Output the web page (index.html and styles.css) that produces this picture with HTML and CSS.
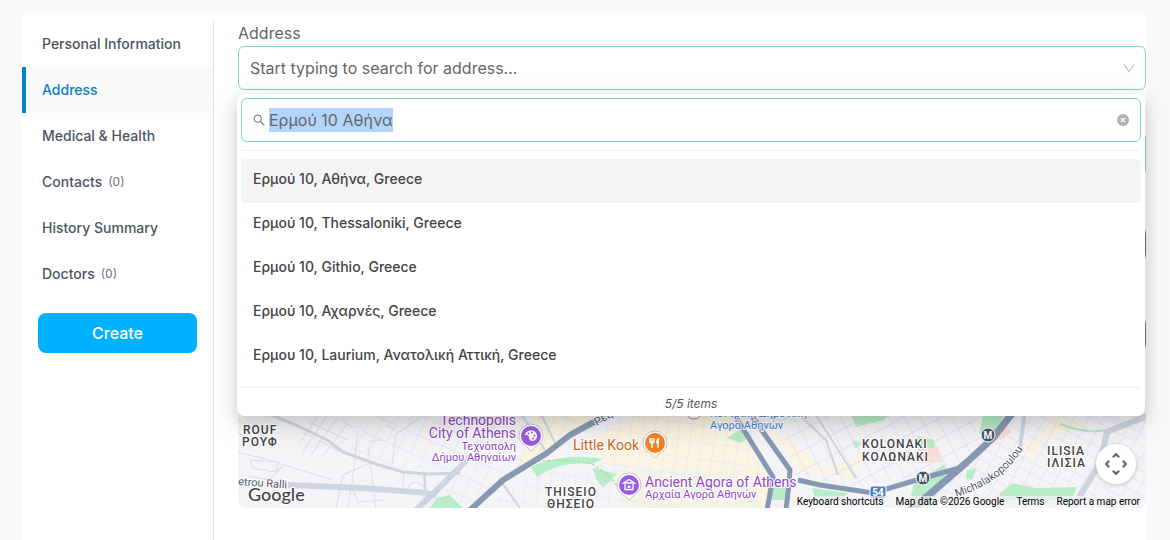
FILE: index.html
```html
<!DOCTYPE html>
<html lang="en">
<head>
<meta charset="utf-8">
<meta name="viewport" content="width=device-width, initial-scale=1">
<title>Address</title>
<link rel="stylesheet" href="styles.css">
</head>
<body>
<div class="panel">
  <aside class="sidebar">
    <nav class="nav" aria-label="Sections">
      <a class="nav-link" href="#personal">Personal Information</a>
      <a class="nav-link nav-link-active" href="#address" aria-current="page">Address</a>
      <a class="nav-link" href="#medical">Medical &amp; Health</a>
      <a class="nav-link" href="#contacts">Contacts <span class="count">(0)</span></a>
      <a class="nav-link" href="#history">History Summary</a>
      <a class="nav-link" href="#doctors">Doctors <span class="count">(0)</span></a>
    </nav>
    <button class="create" type="button">Create</button>
  </aside>

  <main class="content">
    <label class="label" for="address">Address</label>
    <div class="combo">
      <select class="select" id="address">
        <option>Start typing to search for address...</option>
      </select>
      <svg class="chevron" viewBox="0 0 12 12" aria-hidden="true"><path d="M1 2.5 6 9.5 11 2.5" fill="none" stroke="#bdbdbd" stroke-width="1.2"/></svg>

      <div class="dropdown">
        <div class="search">
          <svg class="search-icon" viewBox="0 0 12 12" aria-hidden="true"><circle cx="4.7" cy="4.7" r="3.7" fill="none" stroke="#666" stroke-width="1"/><path d="M7.4 7.4 11.3 11.3" stroke="#666" stroke-width="1.2"/></svg>
          <input class="search-input" id="query" type="text" value="Ερμού 10 Αθήνα" aria-label="Search address" autocomplete="off" spellcheck="false">
          <button class="clear" type="button" aria-label="Clear">
            <svg class="clear-icon" viewBox="0 0 12 12"><circle cx="6" cy="6" r="6" fill="#b3b3b3"/><path d="M4 4l4 4M8 4l-4 4" stroke="#fff" stroke-width="1.1"/></svg>
          </button>
        </div>
        <div class="options" role="listbox" aria-label="Addresses">
          <button class="option option-active" type="button" role="option" aria-selected="true">Ερμού 10, Αθήνα, Greece</button>
          <button class="option" type="button" role="option">Ερμού 10, Thessaloniki, Greece</button>
          <button class="option" type="button" role="option">Ερμού 10, Githio, Greece</button>
          <button class="option" type="button" role="option">Ερμού 10, Αχαρνές, Greece</button>
          <button class="option" type="button" role="option">Ερμου 10, Laurium, Ανατολική Αττική, Greece</button>
        </div>
        <div class="total">5/5 items</div>
      </div>
    </div>

    <div class="fields">
      <input class="field field-valid" type="text" aria-label="Street">
      <input class="field" type="text" aria-label="City">
      <input class="field" type="text" aria-label="Country">
    </div>

    <div class="map">
      <svg class="map-canvas" viewBox="238 400 908 108" preserveAspectRatio="xMidYMid slice" role="img" aria-label="Map of Athens">
        <defs>
          <pattern id="g1" width="19" height="13" patternUnits="userSpaceOnUse" patternTransform="rotate(-66)"><path d="M0 0H19M0 0V13" stroke="#dde1e8" stroke-width="1.2" fill="none"/></pattern>
          <pattern id="g2" width="12" height="17" patternUnits="userSpaceOnUse" patternTransform="rotate(8)"><path d="M0 0H12M0 0V17" stroke="#e1e5ea" stroke-width="1.1" fill="none"/></pattern>
          <pattern id="g3" width="14" height="18" patternUnits="userSpaceOnUse" patternTransform="rotate(-28)"><path d="M0 0H14M0 0V18" stroke="#dce0e8" stroke-width="1.3" fill="none"/></pattern>
          <pattern id="g4" width="13" height="11" patternUnits="userSpaceOnUse" patternTransform="rotate(28)"><path d="M0 0H13M0 0V11" stroke="#dbe0e7" stroke-width="1.2" fill="none"/></pattern>
        </defs>
        <rect x="238" y="400" width="908" height="108" fill="#f4f4f7"/>

        <g fill="#fbf4e2">
          <path d="M535 400H610L570 436 545 450 515 470 530 440Z"/>
          <path d="M590 438 650 412 742 432 770 478 700 470 640 468 600 462Z"/>
          <path d="M700 400H745L735 425 690 425Z"/>
          <path d="M765 430 800 470 850 478 870 450 845 462 820 468 790 440Z"/>
          <path d="M790 485 765 508H735L760 480Z"/>
          <path d="M1022 448 1058 418 1090 424 1045 438 1030 462Z"/>
        </g>
        <path d="M610 470H740L760 508H625Z" fill="#f4f3e8"/>

        <path d="M385 400H600L545 450 470 508H425L462 470 400 468 350 450Z" fill="url(#g1)"/>
        <path d="M610 405H740L785 508H480L540 470 600 470Z" fill="url(#g2)"/>
        <path d="M770 405H1010L960 465 860 488 795 475Z" fill="url(#g3)"/>
        <path d="M940 490 1010 415H1146V508H925Z" fill="url(#g4)"/>

        <g fill="none" stroke="#dce1e8" stroke-width="1.2">
          <path d="M318 416 300 443M327 416 303 452M337 418 311 455M347 424 323 456M303 432 340 452M309 422 348 440M341 418Q350 430 361 426"/>
          <path d="M238 452 272 461 300 470 333 480M250 460 278 462 276 472 252 468ZM248 476 270 480 282 466M238 432 262 446"/>
          <path d="M358 430 353 476 348 508M336 508 343 475 372 462M370 442 380 440M392 464 396 434 420 418M368 448 376 508M404 474 402 492M238 420 270 440M386 425 396 430"/>
          <path d="M352 488 358 502 384 500M424 470V508M408 490A8 8 0 0 1 424 490"/>
        </g>

        <g fill="#b9ecc9">
          <path d="M430 508 437 498 450 495 463 508Z"/>
          <path d="M531 467Q563 452 603 459L592 464Q560 461 537 477Z"/>
          <path d="M593 468 617 474 603 488 596 479Z"/>
          <path d="M727 438 742 428 752 436 740 443Z"/>
          <path d="M850 412H892L884 420 856 427Z"/>
          <path d="M852 440 862 443 856 449Z"/>
          <path d="M918 436 934 440 935 449 918 446Z"/>
          <path d="M907 508 915 482 945 464V480L928 508Z"/>
          <path d="M984 412H1006L994 433 979 434Z"/>
          <path d="M967 470 977 468 972 480 966 478Z"/>
          <path d="M1000 493 1013 483 1035 488 1077 487 1072 500 1000 500Z"/>
          <path d="M812 488 848 493 840 500 815 498ZM772 486 786 486 786 500 770 500Z"/>
        </g>
        <g fill="#f8ddd8">
          <path d="M917 449 938 447 942 462 914 463Z"/>
          <path d="M990 434 1004 424 1012 432 1000 440Z"/>
        </g>
        <path d="M520 470 530 462Q570 458 592 464Q612 476 618 488" fill="none" stroke="#9fdcb5" stroke-width="1.2" stroke-dasharray="3 2"/>
        <path d="M1060 424Q1085 434 1108 430L1122 424" fill="none" stroke="#b5e5ca" stroke-width="2"/>

        <g fill="none" stroke="#cdd6e0" stroke-linejoin="round">
          <path d="M262 411 298 426 327 440 343 452 376 464 403 472 428 474 460 473" stroke-width="3"/>
          <path d="M288 485 363 488 427 493 436 496" stroke-width="6"/>
          <path d="M414 512 440 487 470 457" stroke-width="6"/>
          <path d="M545 450 520 412M556 445 540 412M500 480 520 508M424 472 426 494" stroke-width="2"/>
          <path d="M1150 415 1107 432 1100 463 1080 496 1075 508" stroke-width="6"/>
          <path d="M1025 405 1023 425 1020 448" stroke-width="4"/>
          <path d="M796 412 826 440 838 475M814 412 856 478" stroke-width="2"/>
        </g>
        <g fill="none" stroke="#8799b2" stroke-linejoin="round">
          <path d="M468 512 503 480 547 453 570 435 592 423 614 413" stroke-width="6"/>
          <path d="M735 416 773 477 767 510" stroke-width="5"/>
          <path d="M752 416 763 432 790 470 789 484 786 510" stroke-width="5"/>
          <path d="M798 480 820 485 873 493 920 479 963 467" stroke-width="5"/>
          <path d="M905 514 930 494 966 463 993 438 1014 411" stroke-width="7"/>
        </g>

        <g class="place">
          <text x="243" y="434">ROUF</text><text x="242" y="446">ΡΟΥΦ</text>
          <text x="545" y="496">THISEIO</text><text x="547" y="508">ΘΗΣΕΙΟ</text>
          <text x="862" y="448">KOLONAKI</text><text x="862" y="461">ΚΟΛΩΝΑΚΙ</text>
          <text x="1047" y="455">ILISIA</text><text x="1047" y="467">ΙΛΙΣΙΑ</text>
        </g>
        <g class="poi poi-purple" text-anchor="end">
          <text x="516" y="425">Technopolis</text><text x="516" y="438">City of Athens</text>
          <g class="poi-small"><text x="516" y="450">Τεχνόπολη</text><text x="516" y="461">Δήμου Αθηναίων</text></g>
        </g>
        <g class="poi poi-purple">
          <text x="645" y="487">Ancient Agora of Athens</text>
          <text class="poi-small" x="645" y="498">Αρχαία Αγορά Αθηνών</text>
        </g>
        <text class="poi poi-orange" x="639" y="450" text-anchor="end">Little Kook</text>
        <g class="poi poi-blue poi-small"><text x="710" y="417">Κεντρική Δημοτική</text><text x="710" y="429">Αγορά Αθηνών</text></g>
        <text class="road" x="238" y="485" transform="rotate(4 238 485)">etrou Ralli</text>
        <text class="road" x="597" y="426" transform="rotate(-32 597 426)">Pειραιώς</text>
        <path id="mich" d="M956 497Q1004 483 1026 444" fill="none"/>
        <text class="road"><textPath href="#mich">Michalakopoulou</textPath></text>

        <g>
          <path d="M531 424a12 12 0 0 1 12 12c0 6-5 9-8 11l-4 4-4-4c-3-2-8-5-8-11a12 12 0 0 1 12-12Z" fill="#fff" stroke="#b9b9c4" stroke-width=".8"/>
          <circle cx="531" cy="436" r="10" fill="#9a5bdc"/>
          <path d="M531 430.500c-4 0-6 2.500-6 4.500 2 0 4 0 4 2s1 4 3 4c4 0 5-3 5-5 0-4-3-5.500-6-5.500Z" fill="#fff"/>
          <circle cx="528.500" cy="433.500" r="1" fill="#9a5bdc"/><circle cx="532" cy="432.500" r="1" fill="#9a5bdc"/><circle cx="534.500" cy="435.500" r="1" fill="#9a5bdc"/><circle cx="533" cy="438.500" r="1" fill="#9a5bdc"/>
        </g>
        <g>
          <path d="M655 431a12 12 0 0 1 12 12c0 6-5 9-8 11l-4 4-4-4c-3-2-8-5-8-11a12 12 0 0 1 12-12Z" fill="#fff" stroke="#b9b9c4" stroke-width=".8"/>
          <circle cx="655" cy="443" r="10" fill="#f08326"/>
          <path d="M650 438v3.500q0 1.500 2 1.500t2-1.500V438M652 438v10M658 443v5" fill="none" stroke="#fff" stroke-width="1.400"/><path d="M659 437.500v6h-3q0-5 3-6Z" fill="#fff"/>
        </g>
        <g>
          <path d="M629 473a12 12 0 0 1 12 12c0 6-5 9-8 11l-4 4-4-4c-3-2-8-5-8-11a12 12 0 0 1 12-12Z" fill="#fff" stroke="#b9b9c4" stroke-width=".8"/>
          <circle cx="629" cy="485" r="10" fill="#9a5bdc"/>
          <path d="M623.500 483 629 479.500 634.500 483ZM625 484v5.500h8V484" fill="none" stroke="#fff" stroke-width="1.300"/><path d="M627.500 485.500h3v2.500h-3Z" fill="#fff"/>
        </g>
        <circle cx="694" cy="411" r="8" fill="#fff" stroke="#8c8c94" stroke-width="1"/>
        <g class="metro">
          <circle cx="988" cy="435" r="7"/><text x="988" y="439">M</text>
          <circle cx="923" cy="478" r="7"/><text x="923" y="482">M</text>
        </g>
        <rect x="870" y="486" width="16" height="13" rx="2" fill="#4b7fc4" stroke="#fff"/>
        <text class="shield" x="878" y="496">54</text>
        <text class="google" x="248" y="501">Google</text>
      </svg>
      <button class="pan" type="button" aria-label="Map camera controls">
        <svg class="pan-icon" viewBox="0 0 24 24"><path d="M8.800 5.200 12 2.200l3.200 3M8.800 18.800 12 21.800l3.200-3M5.200 8.800 2.200 12l3 3.200M18.800 8.800l3 3.200-3 3.200" fill="none" stroke="#666" stroke-width="2.200"/></svg>
      </button>
      <div class="credits">
        <button class="credit" type="button">Keyboard shortcuts</button>
        <span class="credit">Map data ©2026 Google</span>
        <a class="credit" href="#terms">Terms</a>
        <a class="credit" href="#report">Report a map error</a>
      </div>
    </div>
  </main>
</div>
<script src="app.js"></script>
</body>
</html>
```
FILE: styles.css
```css
* { box-sizing: border-box; }

body {
  margin: 0;
  min-height: 100vh;
  display: flex;
  padding: 13px 24px 0 22px;
  background: #f8f9fb;
  font-family: Inter, "Liberation Sans", sans-serif;
  color: #666;
}

button, input, select { font: inherit; color: inherit; }
button { cursor: pointer; }

.panel {
  flex: 1;
  min-width: 0;
  display: flex;
  padding-top: 8px;
  background: #fff;
}

.sidebar {
  width: 192px;
  flex: none;
  border-right: 1px solid #e0e2e5;
}

.nav { display: flex; flex-direction: column; }

.nav-link {
  display: flex;
  align-items: center;
  gap: 6px;
  height: 46px;
  padding: 0 0 2px 16px;
  border-left: 4px solid transparent;
  font-size: 14px;
  font-weight: 500;
  color: #4b5563;
  text-decoration: none;
}

.nav-link-active {
  border-left-color: #0b80c3;
  background: #f9fafb;
  color: #0b80c3;
}

.count { font-size: 12px; font-weight: 400; color: #6b7280; }

.create {
  display: block;
  width: calc(100% - 32px);
  height: 40px;
  margin: 16px;
  padding: 0;
  border: 0;
  border-radius: 8px;
  background: #00b1ff;
  color: #fff;
  font-size: 16px;
  font-weight: 500;
}

.content { flex: 1; min-width: 0; padding-left: 24px; }

.label { display: block; font-size: 16px; line-height: 25px; }

.combo { position: relative; }

.select {
  display: block;
  width: 100%;
  height: 44px;
  padding: 0 36px 0 11px;
  border: 1px solid #7fd8b8;
  border-radius: 6px;
  background: #fff;
  appearance: none;
  font-size: 16px;
}

.chevron {
  position: absolute;
  top: 16px;
  right: 11px;
  width: 12px;
  height: 12px;
  pointer-events: none;
}

.dropdown {
  position: absolute;
  z-index: 2;
  top: 48px;
  left: -1px;
  right: 1px;
  padding: 4px;
  border-radius: 8px;
  background: #fff;
  box-shadow: 0 6px 16px rgba(0, 0, 0, 0.14), 0 9px 28px 8px rgba(0, 0, 0, 0.06);
}

.search {
  display: flex;
  align-items: center;
  gap: 4px;
  height: 44px;
  padding: 0 11px;
  border: 1px solid #7fd8b8;
  border-radius: 6px;
}

.search-icon { width: 12px; height: 12px; flex: none; }

.search-input {
  flex: 1;
  min-width: 0;
  height: 24px;
  padding: 0;
  border: 0;
  outline: 0;
  background: none;
  font-size: 16px;
  line-height: 24px;
}

.search-input::selection { background: #b3d5fc; color: #666; }

.clear { display: flex; padding: 0; border: 0; background: none; }
.clear-icon { width: 12px; height: 12px; }

.options {
  display: flex;
  flex-direction: column;
  margin-top: 8px;
  padding: 8px 0;
  border-top: 1px solid #efefef;
  border-bottom: 1px solid #efefef;
}

.option {
  height: 44px;
  padding: 0 12px 6px;
  border: 0;
  border-radius: 4px;
  background: none;
  font-size: 14px;
  font-weight: 500;
  color: #444;
  text-align: left;
}

.option-active { background: #f4f4f4; }

.total {
  padding-top: 8px;
  font-size: 12px;
  line-height: 16px;
  font-style: italic;
  text-align: center;
  color: #555;
}

.fields {
  display: flex;
  flex-direction: column;
  gap: 46px;
  padding: 42px 0 44px;
}

.field {
  width: 100%;
  height: 44px;
  border: 1px solid #777;
  border-radius: 12px;
  background: #fff;
}

.field-valid { border-color: #7fd8b8; border-radius: 6px; }

.map {
  position: relative;
  overflow: hidden;
  border-radius: 0 0 8px 8px;
  font-family: Roboto, "Noto Sans", sans-serif;
}

.map-canvas { display: block; width: 100%; height: 108px; }
.map-canvas text { paint-order: stroke; stroke: #fff; stroke-width: 2px; stroke-linejoin: round; }

.place { font-size: 12px; font-weight: 500; letter-spacing: 1px; fill: #444; }
.poi { font-size: 14px; }
.poi-purple { fill: #9047bf; }
.poi-orange { fill: #c9661d; }
.poi-blue { fill: #3e7fd0; }
.poi-small { font-size: 11px; }
.road { font-size: 11px; fill: #4c586c; }
.metro { fill: #44586b; font-size: 10px; font-weight: 700; text-anchor: middle; }
.metro circle { stroke: #fff; stroke-width: 1px; }
.map-canvas .metro text { fill: #fff; stroke: none; }
.map-canvas .shield { fill: #fff; stroke: none; font-size: 10px; font-weight: 700; text-anchor: middle; }
.google { font-family: Lato, sans-serif; font-size: 18px; font-weight: 500; fill: #444; }

.pan {
  position: absolute;
  right: 10px;
  bottom: 24px;
  display: flex;
  align-items: center;
  justify-content: center;
  width: 40px;
  height: 40px;
  padding: 0;
  border: 0;
  border-radius: 50%;
  background: #fff;
  box-shadow: 0 1px 4px rgba(0, 0, 0, 0.2);
}

.pan-icon { width: 24px; height: 24px; }

.credits {
  position: absolute;
  right: 0;
  bottom: 0;
  display: flex;
  gap: 12px;
  padding: 0 6px 0 4px;
  background: rgba(245, 245, 245, 0.7);
}

.credit {
  padding: 0;
  border: 0;
  background: none;
  font-size: 10px;
  line-height: 12px;
  color: #000;
  text-decoration: none;
}
```
FILE: app.js
```js
const query = document.getElementById("query");
query.focus({ preventScroll: true });
query.select();
```
